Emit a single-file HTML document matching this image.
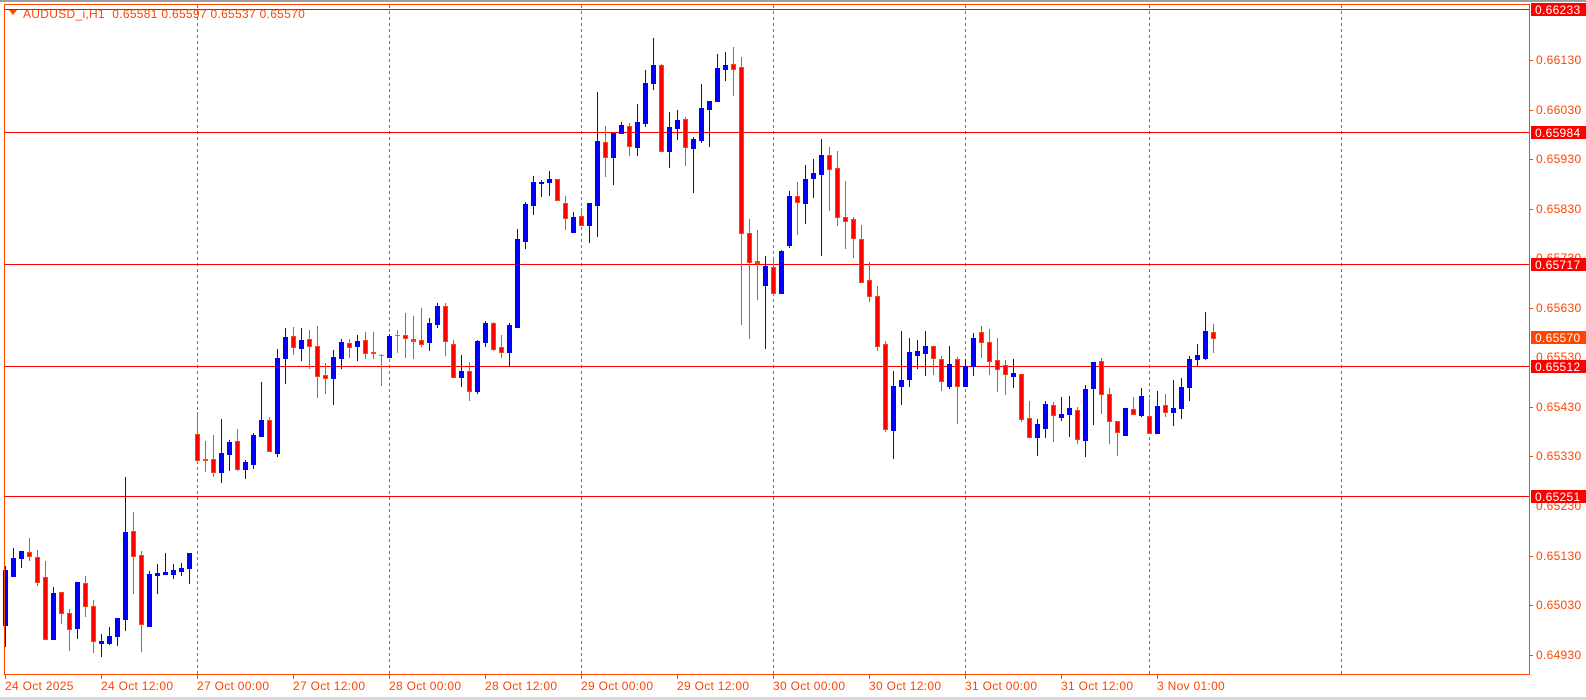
<!DOCTYPE html>
<html><head><meta charset="utf-8"><style>
html,body{margin:0;padding:0;background:#fff;width:1586px;height:700px;overflow:hidden}
svg{display:block}
text{font-family:"Liberation Sans",sans-serif;font-size:12px;letter-spacing:0.3px}
</style></head><body>
<svg id="s" width="1586" height="700" xmlns="http://www.w3.org/2000/svg">
<rect x="0" y="0" width="1586" height="700" fill="#fff"/>
<rect x="0" y="0" width="1586" height="2" fill="#a0a0a0"/>
<rect x="0" y="697" width="1586" height="3" fill="#d8d8d8"/>
<g id="grid" stroke="#FF4500" stroke-width="1" stroke-dasharray="3,3">
<line x1="197.5" y1="5" x2="197.5" y2="674"/>
<line x1="389.5" y1="5" x2="389.5" y2="674"/>
<line x1="581.5" y1="5" x2="581.5" y2="674"/>
<line x1="773.5" y1="5" x2="773.5" y2="674"/>
<line x1="965.5" y1="5" x2="965.5" y2="674"/>
<line x1="1149.5" y1="5" x2="1149.5" y2="674"/>
<line x1="1341.5" y1="5" x2="1341.5" y2="674"/>
</g>
<g fill="#FF0000">
<rect x="4" y="9" width="1525" height="1"/>
<rect x="4" y="132" width="1525" height="1"/>
<rect x="4" y="264" width="1525" height="1"/>
<rect x="4" y="366" width="1525" height="1"/>
<rect x="4" y="496" width="1525" height="1"/>
</g>
<g id="c"></g>
<rect x="4.5" y="4.5" width="1525" height="670" fill="none" stroke="#FF4500" stroke-width="1"/>
<polygon points="9,10 17,10 13,15" fill="#FF4500"/>
<text x="23" y="18" fill="#FF4500">AUDUSD_i,H1&#160;&#160;0.65581 0.65597 0.65537 0.65570</text>
<g fill="#FF4500" id="pt">
<text x="1536" y="64">0.66130</text>
<text x="1536" y="114">0.66030</text>
<text x="1536" y="163">0.65930</text>
<text x="1536" y="213">0.65830</text>
<text x="1536" y="262">0.65730</text>
<text x="1536" y="312">0.65630</text>
<text x="1536" y="361">0.65530</text>
<text x="1536" y="411">0.65430</text>
<text x="1536" y="460">0.65330</text>
<text x="1536" y="510">0.65230</text>
<text x="1536" y="560">0.65130</text>
<text x="1536" y="609">0.65030</text>
<text x="1536" y="659">0.64930</text>
</g>
<g stroke="#FF4500">
<line x1="1530" y1="60.5" x2="1533" y2="60.5"/><line x1="1530" y1="110.5" x2="1533" y2="110.5"/>
<line x1="1530" y1="159.5" x2="1533" y2="159.5"/><line x1="1530" y1="209.5" x2="1533" y2="209.5"/>
<line x1="1530" y1="308.5" x2="1533" y2="308.5"/><line x1="1530" y1="407.5" x2="1533" y2="407.5"/>
<line x1="1530" y1="456.5" x2="1533" y2="456.5"/><line x1="1530" y1="556.5" x2="1533" y2="556.5"/>
<line x1="1530" y1="605.5" x2="1533" y2="605.5"/><line x1="1530" y1="655.5" x2="1533" y2="655.5"/>
</g>
<g>
<rect x="1531" y="3" width="55" height="13" fill="#FF0000"/><text x="1535" y="14" fill="#fff">0.66233</text>
<rect x="1531" y="126" width="55" height="13" fill="#FF0000"/><text x="1535" y="137" fill="#fff">0.65984</text>
<rect x="1531" y="258" width="55" height="13" fill="#FF0000"/><text x="1535" y="269" fill="#fff">0.65717</text>
<rect x="1531" y="331" width="55" height="13" fill="#FF4500"/><text x="1535" y="342" fill="#fff">0.65570</text>
<rect x="1531" y="360" width="55" height="13" fill="#FF0000"/><text x="1535" y="371" fill="#fff">0.65512</text>
<rect x="1531" y="490" width="55" height="13" fill="#FF0000"/><text x="1535" y="501" fill="#fff">0.65251</text>
</g>
<g stroke="#FF4500">
<line x1="5.5" y1="674" x2="5.5" y2="679"/><line x1="101.5" y1="674" x2="101.5" y2="679"/>
<line x1="197.5" y1="674" x2="197.5" y2="679"/><line x1="293.5" y1="674" x2="293.5" y2="679"/>
<line x1="389.5" y1="674" x2="389.5" y2="679"/><line x1="485.5" y1="674" x2="485.5" y2="679"/>
<line x1="581.5" y1="674" x2="581.5" y2="679"/><line x1="677.5" y1="674" x2="677.5" y2="679"/>
<line x1="773.5" y1="674" x2="773.5" y2="679"/><line x1="869.5" y1="674" x2="869.5" y2="679"/>
<line x1="965.5" y1="674" x2="965.5" y2="679"/><line x1="1061.5" y1="674" x2="1061.5" y2="679"/>
<line x1="1157.5" y1="674" x2="1157.5" y2="679"/>
</g>
<g fill="#FF4500">
<text x="5" y="690">24 Oct 2025</text>
<text x="101" y="690">24 Oct 12:00</text>
<text x="197" y="690">27 Oct 00:00</text>
<text x="293" y="690">27 Oct 12:00</text>
<text x="389" y="690">28 Oct 00:00</text>
<text x="485" y="690">28 Oct 12:00</text>
<text x="581" y="690">29 Oct 00:00</text>
<text x="677" y="690">29 Oct 12:00</text>
<text x="773" y="690">30 Oct 00:00</text>
<text x="869" y="690">30 Oct 12:00</text>
<text x="965" y="690">31 Oct 00:00</text>
<text x="1061" y="690">31 Oct 12:00</text>
<text x="1157" y="690">3 Nov 01:00</text>
</g>
</svg>
<script>
var d=[[5,566,647,570,625,'b'],[13,548,576,558,576,'b'],[21,551,568,551,558,'b'],[29,538,561,552,556,'r'],[37,550,586,557,582,'r'],[45,561,639,577,639,'r'],[53,587,639,593,639,'b'],[61,592,624,592,613,'r'],[69,609,651,613,629,'r'],[77,582,639,582,628,'b'],[85,576,617,583,606,'r'],[93,600,653,606,641,'r'],[101,634,657,641,643,'b'],[109,627,645,636,643,'b'],[117,618,646,618,636,'b'],[125,477,631,532,619,'b'],[133,512,594,531,556,'r'],[141,551,652,555,624,'r'],[149,571,626,574,626,'b'],[157,564,594,573,575,'b'],[165,553,574,572,574,'b'],[173,564,579,570,574,'b'],[181,563,576,568,571,'b'],[189,553,584,553,568,'b'],
[197,412,460,434,460,'r'],[205,441,472,459,460,'r'],[213,435,477,459,472,'r'],[221,419,483,453,472,'b'],[229,440,471,442,454,'b'],[237,429,471,441,469,'r'],[245,460,479,462,469,'b'],[253,433,469,435,464,'b'],[261,382,436,420,436,'b'],[269,417,452,420,451,'r'],[277,349,457,358,453,'b'],[285,328,384,337,358,'b'],[293,327,355,336,347,'r'],[301,328,361,340,348,'b'],[309,330,369,339,346,'r'],[317,326,398,346,376,'r'],[325,363,394,375,378,'r'],[333,350,405,357,378,'b'],[341,339,369,342,358,'b'],[349,339,358,343,347,'r'],[357,335,361,341,346,'b'],[365,332,359,340,353,'r'],[373,332,359,352,353,'r'],[381,354,386,355,356,'g'],[389,334,357,336,357,'b'],[397,330,353,335,336,'g'],
[405,313,358,335,338,'r'],[413,316,359,339,341,'r'],[421,308,347,340,344,'r'],[429,318,351,323,342,'b'],[437,303,328,306,324,'b'],[445,303,356,306,341,'r'],[453,340,378,344,377,'r'],[461,355,387,371,377,'b'],[469,362,401,371,391,'r'],[477,340,394,341,391,'b'],[485,321,347,323,342,'b'],[493,322,351,323,349,'r'],[501,335,358,347,352,'r'],[509,323,367,325,352,'b'],[517,229,327,239,327,'b'],[525,202,249,204,241,'b'],[533,176,215,182,205,'b'],[541,180,197,182,183,'b'],[549,171,196,179,182,'b'],[557,179,201,179,200,'r'],[565,196,230,203,218,'r'],[573,212,233,217,232,'b'],[581,208,225,216,225,'r'],[589,203,243,203,225,'b'],
[597,92,237,141,205,'b'],[605,126,177,142,157,'r'],[613,133,185,133,157,'b'],[621,122,133,125,133,'b'],[629,123,156,126,146,'r'],[637,104,156,122,147,'b'],[645,70,127,83,123,'b'],[653,38,90,65,83,'b'],[661,64,151,65,151,'r'],[669,112,168,127,151,'b'],[677,110,140,120,128,'b'],[685,117,166,119,147,'r'],[693,137,193,139,148,'b'],[701,84,143,108,140,'b'],[709,101,147,101,109,'b'],[717,54,101,68,101,'b'],[725,52,81,65,69,'b'],[733,47,96,64,69,'r'],[741,57,325,67,233,'r'],[749,219,339,233,262,'r'],[757,230,300,261,263,'r'],[765,256,349,266,285,'b'],[773,257,293,267,293,'r'],
[781,250,293,251,293,'b'],[789,191,248,196,245,'b'],[797,182,235,196,202,'r'],[805,165,224,179,203,'b'],[813,159,198,173,178,'b'],[821,139,256,155,174,'b'],[829,147,211,155,169,'r'],[837,151,226,168,217,'r'],[845,181,249,217,221,'r'],[853,217,258,219,238,'r'],[861,225,282,239,282,'r'],[869,262,302,280,296,'r'],[877,286,351,296,346,'r'],[885,341,432,344,429,'r'],[893,371,459,386,430,'b'],[901,331,405,380,386,'b'],[909,338,387,352,379,'b'],[917,340,369,351,355,'b'],[925,331,376,346,353,'b'],[933,346,375,346,358,'r'],[941,356,391,359,381,'r'],[949,346,389,364,386,'b'],[957,357,424,359,386,'r'],
[965,359,386,366,386,'b'],[973,333,376,338,366,'b'],[981,326,358,332,342,'r'],[989,329,375,342,361,'r'],[997,338,392,360,369,'r'],[1005,360,395,365,374,'r'],[1013,359,388,373,376,'b'],[1021,374,422,374,419,'r'],[1029,401,437,418,437,'r'],[1037,419,456,424,437,'b'],[1045,401,438,404,428,'b'],[1053,402,442,405,415,'r'],[1061,397,421,414,417,'b'],[1069,396,437,408,414,'b'],[1077,407,444,410,439,'r'],[1085,385,457,389,440,'b'],[1093,362,425,362,388,'b'],[1101,358,414,361,394,'r'],[1109,388,444,394,421,'r'],[1117,421,456,421,432,'r'],[1125,408,436,408,435,'b'],[1133,397,414,409,414,'r'],[1141,388,417,396,415,'b'],
[1149,399,433,416,433,'r'],[1157,391,433,406,433,'b'],[1165,394,417,405,412,'r'],[1173,380,426,408,412,'b'],[1181,378,419,387,408,'b'],[1189,356,401,359,387,'b'],[1197,344,366,355,359,'b'],[1205,312,360,331,358,'b'],[1213,324,353,332,338,'r']];
var g=document.getElementById('c'),h='';
d.forEach(function(c){var x=c[0],hi=c[1],lo=c[2],t=c[3],b=c[4],k=c[5];
var wc=k=='b'?'#0000FF':(k=='g'?'#00E000':'#FF4500');
h+='<rect x="'+x+'" y="'+hi+'" width="1" height="'+(lo-hi)+'" fill="'+wc+'"/>';
var bh=Math.max(b-t,1);
if(k=='b'){h+='<rect x="'+(x-2)+'" y="'+t+'" width="5" height="'+(bh+1)+'" fill="#0000FF"/>';}
else if(k=='g'){h+='<rect x="'+(x-2)+'" y="'+t+'" width="5" height="1" fill="#00E000"/>';}
else{h+='<rect x="'+(x-2)+'" y="'+t+'" width="5" height="'+(bh+1)+'" fill="#FF4500"/>';
if(bh>2)h+='<rect x="'+(x-1)+'" y="'+(t+1)+'" width="3" height="'+(bh-1)+'" fill="#FF0000"/>';}
});
g.innerHTML=h;
</script>
</body></html>
